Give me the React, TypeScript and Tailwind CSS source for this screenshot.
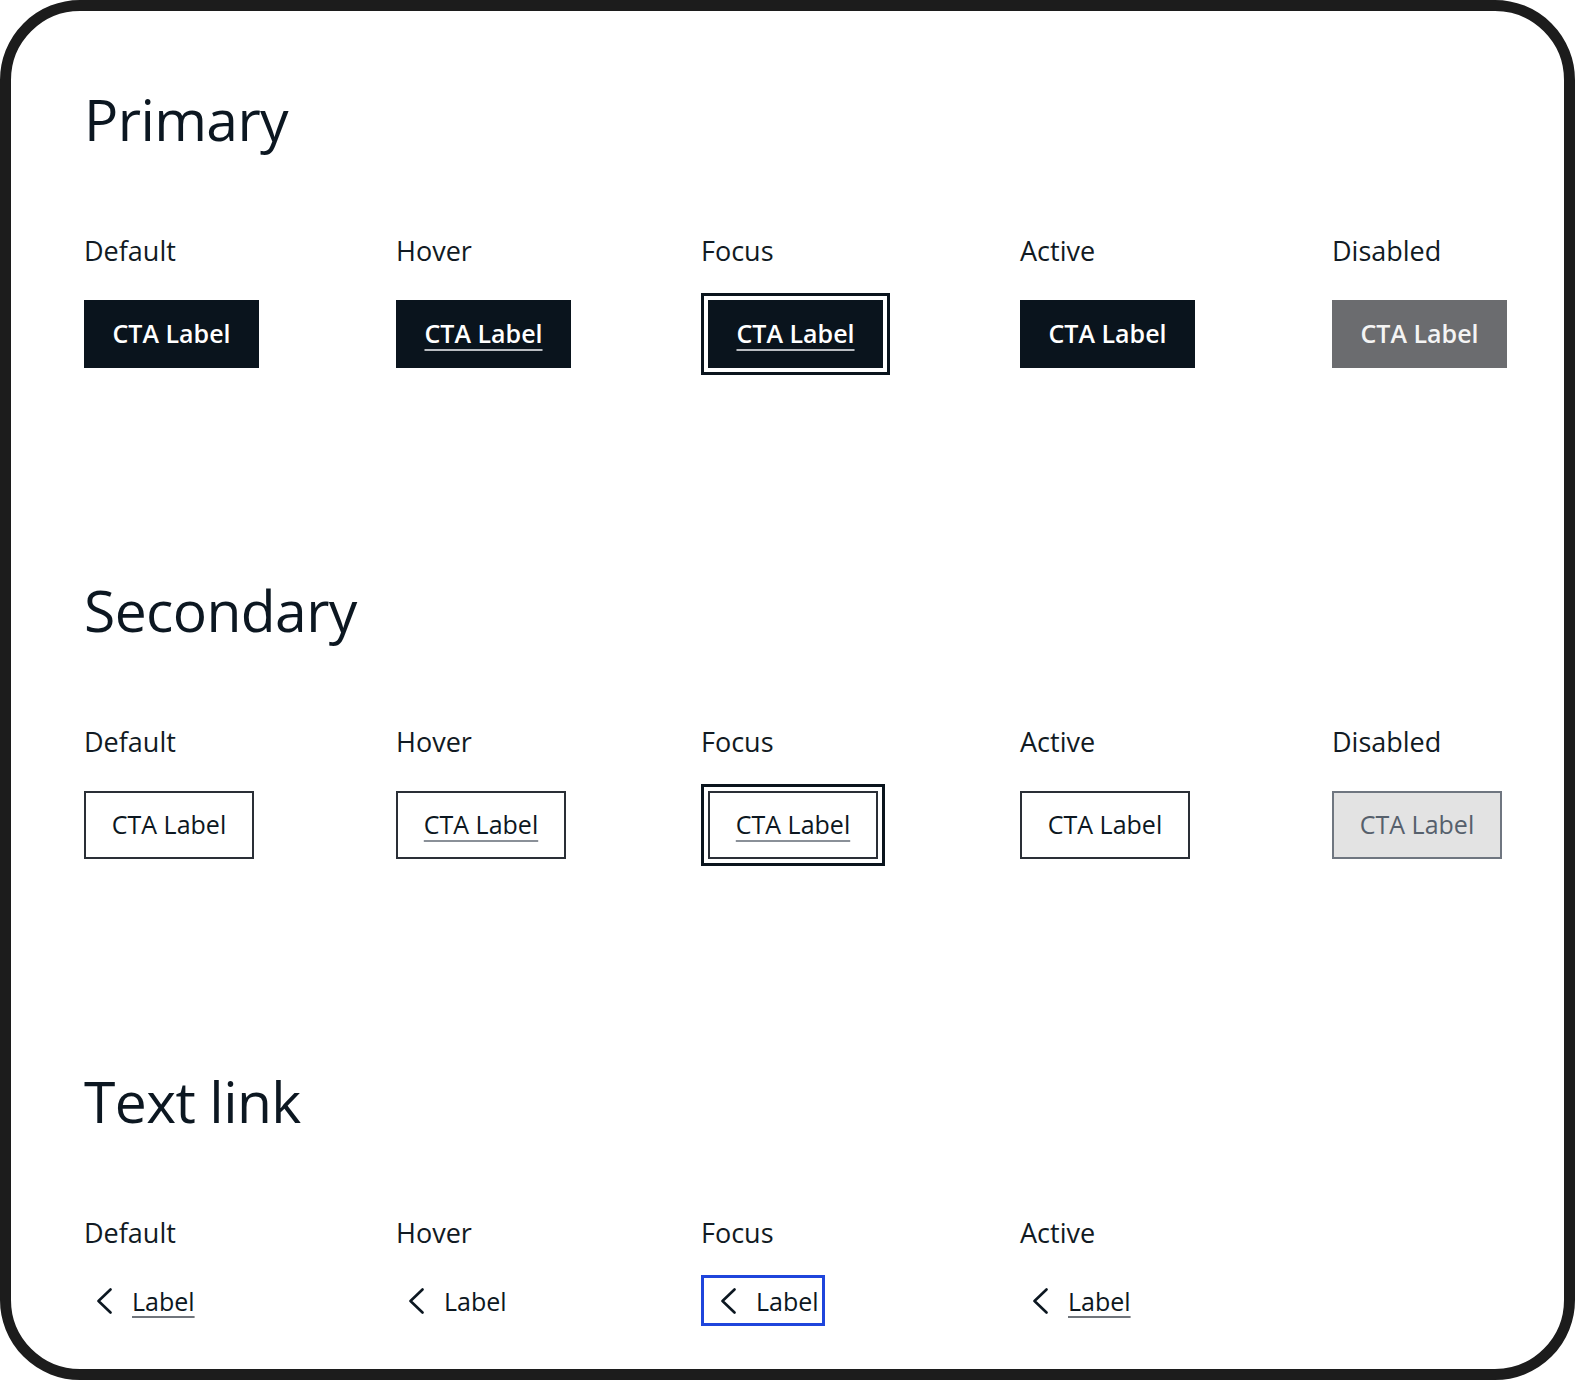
import React from "react";

const INK = "text-[#0c1721]";

function Chevron() {
  return (
    <svg width="16" height="26" viewBox="0 0 16 26" fill="none" className="shrink-0">
      <polyline
        points="14.5,1.5 2.5,13 14.5,24.5"
        stroke="#0c1721"
        strokeWidth="2.6"
        strokeLinecap="round"
        strokeLinejoin="round"
      />
    </svg>
  );
}

function Section({
  title,
  last,
  children,
}: {
  title: string;
  last?: boolean;
  children: React.ReactNode;
}) {
  return (
    <section className={last ? "" : "h-[491px]"}>
      <h2 className={`text-[57px] leading-[57px] tracking-[-0.6px] font-normal ${INK}`}>{title}</h2>
      <div className="mt-[90px] flex">{children}</div>
    </section>
  );
}

function Cell({ width, label, children }: { width: string; label: string; children: React.ReactNode }) {
  return (
    <div className={width}>
      <div className="text-[27px] leading-[26px] text-[#111a23]">{label}</div>
      {children}
    </div>
  );
}

function PrimaryButton({ underline, disabled }: { underline?: boolean; disabled?: boolean }) {
  return (
    <div
      className={`flex h-[68px] w-[175px] items-center justify-center text-[25px] font-semibold ${
        disabled ? "bg-[#6b6c6f] text-[#f4f4f4]" : "bg-[#0a141d] text-white"
      }`}
    >
      <span
        className={
          underline ? "underline decoration-2 underline-offset-[6px] decoration-[#b9bdc2]" : ""
        }
      >
        CTA Label
      </span>
    </div>
  );
}

function SecondaryButton({ underline, disabled }: { underline?: boolean; disabled?: boolean }) {
  return (
    <div
      className={`flex h-[68px] w-[170px] items-center justify-center border-2 text-[25px] ${
        disabled
          ? "border-[#6f7680] bg-[#e3e3e3] text-[#56606c]"
          : "border-[#2a2f36] bg-white text-[#0c1721]"
      }`}
    >
      <span
        className={
          underline ? "underline decoration-2 underline-offset-[6px] decoration-[#8a9098]" : ""
        }
      >
        CTA Label
      </span>
    </div>
  );
}

function TextLink({ underline, focus }: { underline?: boolean; focus?: boolean }) {
  return (
    <div
      className={`mt-[29px] inline-flex h-[51px] items-center border-[3px] ${
        focus ? "border-[#1f45dc] pl-[16px] pr-[3px]" : "border-transparent pl-[9px]"
      }`}
    >
      <Chevron />
      <span
        className={`ml-[20px] text-[25px] leading-[26px] ${INK} ${
          underline ? "underline decoration-2 underline-offset-[5px] decoration-[#6f747b]" : ""
        }`}
      >
        Label
      </span>
    </div>
  );
}

export default function App() {
  return (
    <div className="h-[1380px] w-[1575px] overflow-hidden bg-white font-['Open_Sans',sans-serif]">
      <div className="h-full rounded-[80px] border-[11px] border-[#1c1c1c] pl-[73px] pt-[80px]">
        <Section title="Primary">
          <Cell width="w-[312px]" label="Default">
            <div className="mt-[36px]">
              <PrimaryButton />
            </div>
          </Cell>
          <Cell width="w-[305px]" label="Hover">
            <div className="mt-[36px]">
              <PrimaryButton underline />
            </div>
          </Cell>
          <Cell width="w-[319px]" label="Focus">
            <div className="mt-[29px] inline-block border-[3px] border-[#0a141d] p-[4px]">
              <PrimaryButton underline />
            </div>
          </Cell>
          <Cell width="w-[312px]" label="Active">
            <div className="mt-[36px]">
              <PrimaryButton />
            </div>
          </Cell>
          <Cell width="flex-1" label="Disabled">
            <div className="mt-[36px]">
              <PrimaryButton disabled />
            </div>
          </Cell>
        </Section>

        <Section title="Secondary">
          <Cell width="w-[312px]" label="Default">
            <div className="mt-[36px]">
              <SecondaryButton />
            </div>
          </Cell>
          <Cell width="w-[305px]" label="Hover">
            <div className="mt-[36px]">
              <SecondaryButton underline />
            </div>
          </Cell>
          <Cell width="w-[319px]" label="Focus">
            <div className="mt-[29px] inline-block border-[3px] border-[#0a141d] p-[4px]">
              <SecondaryButton underline />
            </div>
          </Cell>
          <Cell width="w-[312px]" label="Active">
            <div className="mt-[36px]">
              <SecondaryButton />
            </div>
          </Cell>
          <Cell width="flex-1" label="Disabled">
            <div className="mt-[36px]">
              <SecondaryButton disabled />
            </div>
          </Cell>
        </Section>

        <Section title="Text link" last>
          <Cell width="w-[312px]" label="Default">
            <TextLink underline />
          </Cell>
          <Cell width="w-[305px]" label="Hover">
            <TextLink />
          </Cell>
          <Cell width="w-[319px]" label="Focus">
            <TextLink focus />
          </Cell>
          <Cell width="w-[312px]" label="Active">
            <TextLink underline />
          </Cell>
        </Section>
      </div>
    </div>
  );
}
